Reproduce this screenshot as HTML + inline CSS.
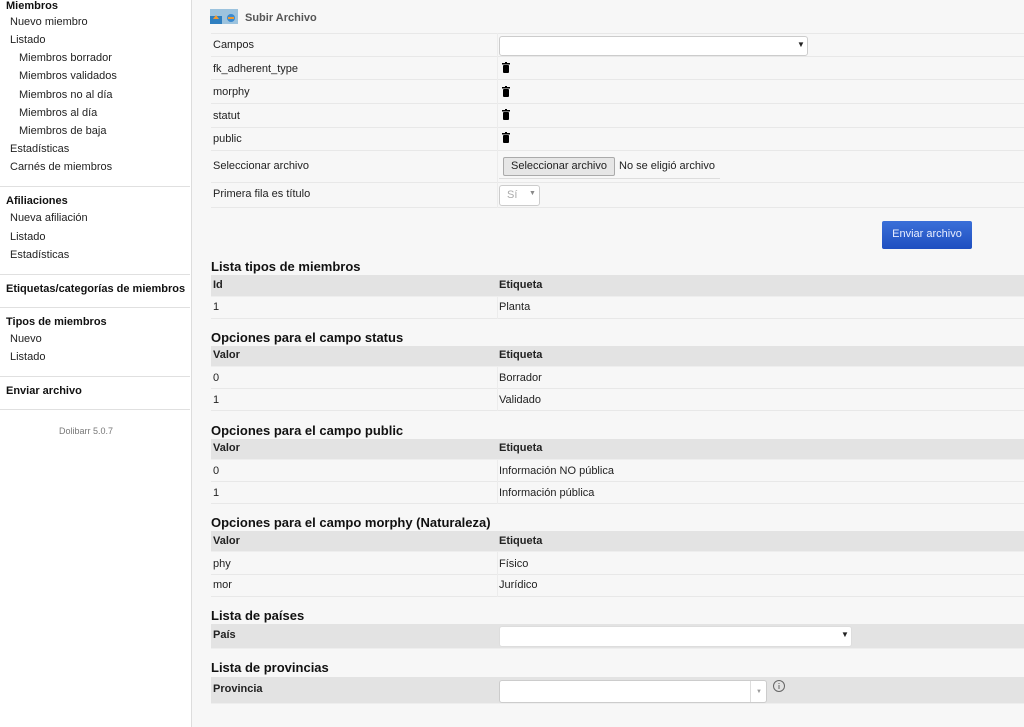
<!DOCTYPE html>
<html><head><meta charset="utf-8"><style>
*{margin:0;padding:0;box-sizing:border-box}
body{width:1024px;height:727px;overflow:hidden;background:#f7f7f7;font-family:"Liberation Sans",sans-serif;font-size:11px;color:#222;position:relative}
.a{position:absolute;white-space:nowrap}
#side{position:absolute;left:0;top:0;width:192px;height:727px;background:#fff;border-right:1px solid #ddd}
.sb{font-weight:bold;font-size:11px;color:#111}
.sep{position:absolute;left:0;width:190px;height:1px;background:#e0e0e0}
.h{font-weight:bold;font-size:13px;color:#111}
.hdr{position:absolute;left:211px;width:813px;background:#e3e3e3;border-bottom:1px solid #eee}
.row{position:absolute;left:211px;width:813px;border-bottom:1px solid #e8e8e8}
.vl{position:absolute;left:497px;width:1px;background:#ececec}
.b{font-weight:bold}
.trash{position:absolute;width:8px;height:11px}
.sel{position:absolute;background:#fff;border:1px solid #ccc;border-radius:3px}
</style></head><body>
<div id="side">
<div class="a sb" style="left:6px;top:0px">Miembros</div>
<div class="a" style="left:10px;top:16px">Nuevo miembro</div>
<div class="a" style="left:10px;top:34px">Listado</div>
<div class="a" style="left:19px;top:52px">Miembros borrador</div>
<div class="a" style="left:19px;top:70px">Miembros validados</div>
<div class="a" style="left:19px;top:89px">Miembros no al día</div>
<div class="a" style="left:19px;top:107px">Miembros al día</div>
<div class="a" style="left:19px;top:125px">Miembros de baja</div>
<div class="a" style="left:10px;top:143px">Estadísticas</div>
<div class="a" style="left:10px;top:161px">Carnés de miembros</div>
<div class="sep" style="top:186px"></div>
<div class="a sb" style="left:6px;top:195px">Afiliaciones</div>
<div class="a" style="left:10px;top:212px">Nueva afiliación</div>
<div class="a" style="left:10px;top:231px">Listado</div>
<div class="a" style="left:10px;top:249px">Estadísticas</div>
<div class="sep" style="top:274px"></div>
<div class="a sb" style="left:6px;top:283px">Etiquetas/categorías de miembros</div>
<div class="sep" style="top:307px"></div>
<div class="a sb" style="left:6px;top:316px">Tipos de miembros</div>
<div class="a" style="left:10px;top:333px">Nuevo</div>
<div class="a" style="left:10px;top:351px">Listado</div>
<div class="sep" style="top:376px"></div>
<div class="a sb" style="left:6px;top:385px">Enviar archivo</div>
<div class="sep" style="top:409px"></div>
<div class="a" style="left:59px;top:426px;font-size:9px;color:#777">Dolibarr 5.0.7</div>
</div>

<svg class="a" style="left:210px;top:9px" width="28" height="15"><rect x="0" y="0" width="28" height="15" fill="#9cc3de"/><rect x="0" y="7" width="12" height="8" fill="#2f7fc0"/><path d="M3 10 L6 6 L9 10Z" fill="#f29a2e"/><circle cx="21" cy="9" r="4" fill="#3a8ad0"/><rect x="18" y="8" width="6" height="2" fill="#f29a2e"/></svg>
<div class="a b" style="left:245px;top:12px;color:#555">Subir Archivo</div>

<div class="row" style="top:33px;height:24px;border-top:1px solid #e8e8e8"></div>
<div class="row" style="top:57px;height:23px"></div>
<div class="row" style="top:80px;height:24px"></div>
<div class="row" style="top:104px;height:24px"></div>
<div class="row" style="top:128px;height:23px"></div>
<div class="row" style="top:151px;height:32px"></div>
<div class="row" style="top:183px;height:25px"></div>
<div class="vl" style="top:33px;height:175px"></div>
<div class="a" style="left:213px;top:39px">Campos</div>
<div class="a" style="left:213px;top:63px">fk_adherent_type</div>
<div class="a" style="left:213px;top:86px">morphy</div>
<div class="a" style="left:213px;top:110px">statut</div>
<div class="a" style="left:213px;top:133px">public</div>
<div class="a" style="left:213px;top:160px">Seleccionar archivo</div>
<div class="a" style="left:213px;top:188px">Primera fila es título</div>
<div class="sel" style="left:499px;top:36px;width:309px;height:20px"></div>
<div class="a" style="left:797px;top:40px;font-size:8px">▼</div>
<svg class="trash" style="left:502px;top:62px" viewBox="0 0 8 11"><rect x="0" y="1" width="8" height="1.5" fill="#000"/><rect x="3" y="0" width="2" height="1" fill="#000"/><rect x="1" y="3" width="6" height="8" rx="1" fill="#000"/></svg>
<svg class="trash" style="left:502px;top:86px" viewBox="0 0 8 11"><rect x="0" y="1" width="8" height="1.5" fill="#000"/><rect x="3" y="0" width="2" height="1" fill="#000"/><rect x="1" y="3" width="6" height="8" rx="1" fill="#000"/></svg>
<svg class="trash" style="left:502px;top:109px" viewBox="0 0 8 11"><rect x="0" y="1" width="8" height="1.5" fill="#000"/><rect x="3" y="0" width="2" height="1" fill="#000"/><rect x="1" y="3" width="6" height="8" rx="1" fill="#000"/></svg>
<svg class="trash" style="left:502px;top:132px" viewBox="0 0 8 11"><rect x="0" y="1" width="8" height="1.5" fill="#000"/><rect x="3" y="0" width="2" height="1" fill="#000"/><rect x="1" y="3" width="6" height="8" rx="1" fill="#000"/></svg>
<div class="a" style="left:499px;top:178px;width:221px;height:1px;background:#ddd"></div>
<div class="a" style="left:503px;top:157px;width:112px;height:19px;background:#e6e6e6;border:1px solid #aaa;border-radius:2px;text-align:center;line-height:17px">Seleccionar archivo</div>
<div class="a" style="left:619px;top:160px">No se eligió archivo</div>
<div class="sel" style="left:499px;top:185px;width:41px;height:21px"></div>
<div class="a" style="left:507px;top:189px;color:#aaa">Sí</div>
<div class="a" style="left:529px;top:190px;font-size:7px;color:#888">▼</div>

<div class="a" style="left:882px;top:221px;width:90px;height:28px;background:linear-gradient(#3a6fd8,#1f4fc0);border-radius:2px;color:#e8eeff;text-align:center;line-height:26px">Enviar archivo</div>

<div class="a h" style="left:211px;top:259px">Lista tipos de miembros</div>
<div class="hdr" style="top:275px;height:22px"></div>
<div class="a b" style="left:213px;top:279px">Id</div><div class="a b" style="left:499px;top:279px">Etiqueta</div>
<div class="row" style="top:297px;height:22px"></div><div class="vl" style="top:297px;height:22px"></div>
<div class="a" style="left:213px;top:301px">1</div><div class="a" style="left:499px;top:301px">Planta</div>

<div class="a h" style="left:211px;top:330px">Opciones para el campo status</div>
<div class="hdr" style="top:346px;height:21px"></div>
<div class="a b" style="left:213px;top:349px">Valor</div><div class="a b" style="left:499px;top:349px">Etiqueta</div>
<div class="row" style="top:367px;height:22px"></div><div class="row" style="top:389px;height:22px"></div><div class="vl" style="top:367px;height:44px"></div>
<div class="a" style="left:213px;top:372px">0</div><div class="a" style="left:499px;top:372px">Borrador</div>
<div class="a" style="left:213px;top:394px">1</div><div class="a" style="left:499px;top:394px">Validado</div>

<div class="a h" style="left:211px;top:423px">Opciones para el campo public</div>
<div class="hdr" style="top:439px;height:21px"></div>
<div class="a b" style="left:213px;top:442px">Valor</div><div class="a b" style="left:499px;top:442px">Etiqueta</div>
<div class="row" style="top:460px;height:22px"></div><div class="row" style="top:482px;height:22px"></div><div class="vl" style="top:460px;height:44px"></div>
<div class="a" style="left:213px;top:465px">0</div><div class="a" style="left:499px;top:465px">Información NO pública</div>
<div class="a" style="left:213px;top:487px">1</div><div class="a" style="left:499px;top:487px">Información pública</div>

<div class="a h" style="left:211px;top:515px">Opciones para el campo morphy (Naturaleza)</div>
<div class="hdr" style="top:531px;height:21px"></div>
<div class="a b" style="left:213px;top:535px">Valor</div><div class="a b" style="left:499px;top:535px">Etiqueta</div>
<div class="row" style="top:552px;height:23px"></div><div class="row" style="top:575px;height:22px"></div><div class="vl" style="top:552px;height:45px"></div>
<div class="a" style="left:213px;top:558px">phy</div><div class="a" style="left:499px;top:558px">Físico</div>
<div class="a" style="left:213px;top:579px">mor</div><div class="a" style="left:499px;top:579px">Jurídico</div>

<div class="a h" style="left:211px;top:608px">Lista de países</div>
<div class="hdr" style="top:624px;height:25px"></div>
<div class="a b" style="left:213px;top:629px">País</div>
<div class="sel" style="left:499px;top:626px;width:353px;height:21px;border-color:#ddd"></div>
<div class="a" style="left:841px;top:630px;font-size:8px">▼</div>

<div class="a h" style="left:211px;top:660px">Lista de provincias</div>
<div class="hdr" style="top:677px;height:27px"></div>
<div class="a b" style="left:213px;top:683px">Provincia</div>
<div class="sel" style="left:499px;top:680px;width:268px;height:23px"></div>
<div class="a" style="left:750px;top:681px;width:1px;height:21px;background:#ddd"></div>
<div class="a" style="left:756px;top:689px;font-size:6px;color:#999">▼</div>
<svg class="a" style="left:772px;top:679px" width="14" height="14"><circle cx="7" cy="7" r="5.5" fill="none" stroke="#666" stroke-width="1"/><rect x="6.5" y="6" width="1" height="4" fill="#666"/><rect x="6.5" y="4" width="1" height="1" fill="#666"/></svg>
</body></html>
